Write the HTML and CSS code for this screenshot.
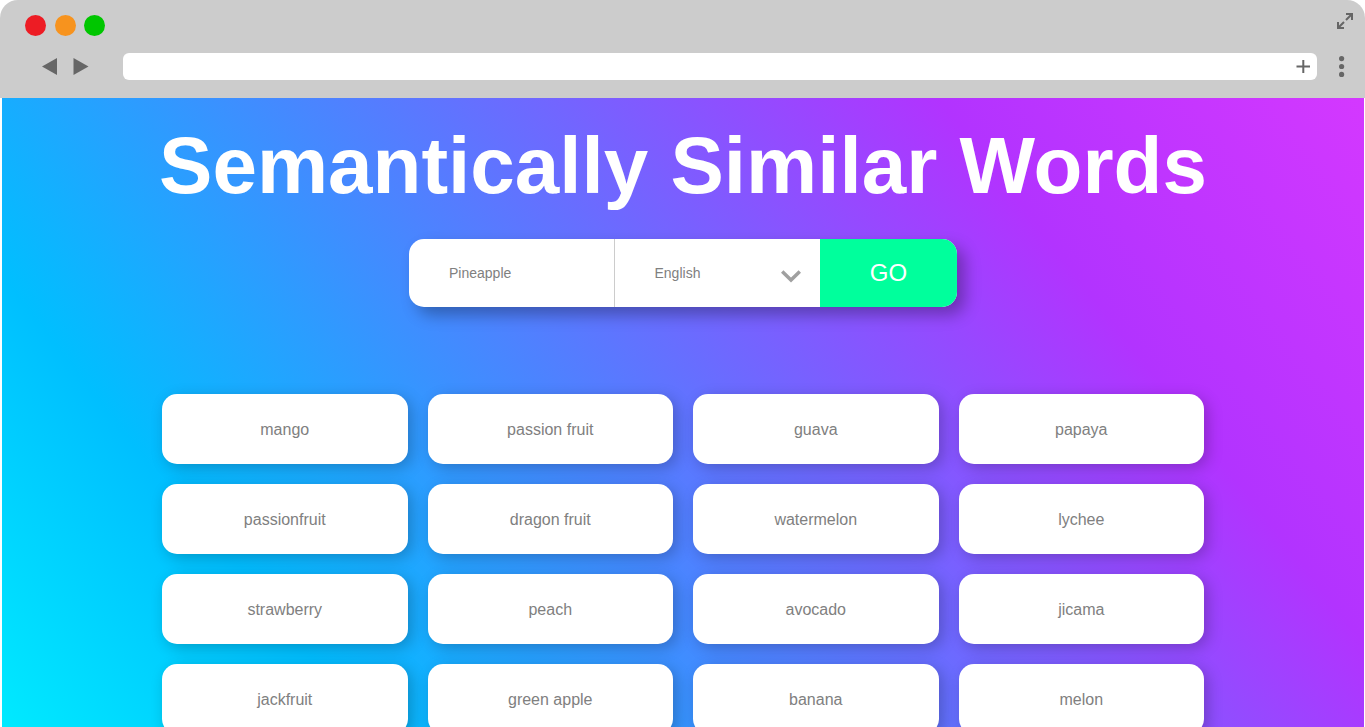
FILE: index.html
```html
<!DOCTYPE html>
<html lang="en">
<head>
<meta charset="utf-8">
<title>Semantically Similar Words</title>
<link rel="stylesheet" href="styles.css">
</head>
<body>
<div class="browser">
  <header class="chrome">
    <div class="chrome-top">
      <div class="lights">
        <span class="light red"></span>
        <span class="light orange"></span>
        <span class="light green"></span>
      </div>
      <button class="icon-button" aria-label="Full screen">
        <svg width="16" height="16" viewBox="0 0 16 16" fill="none" stroke="#666" stroke-width="2"><path d="M9 1h6v6M15 1L9 7M1 9v6h6M1 15l6-6"/></svg>
      </button>
    </div>
    <div class="chrome-bar">
      <nav class="arrows">
        <button class="icon-button" aria-label="Back"><svg width="16" height="18" viewBox="0 0 16 18"><path d="M0 8.500L15 0v17z" fill="#666"/></svg></button>
        <button class="icon-button" aria-label="Forward"><svg width="16" height="18" viewBox="0 0 16 18"><path d="M15.500 8.500L0.500 0v17z" fill="#666"/></svg></button>
      </nav>
      <div class="address">
        <input class="address-input" type="text" aria-label="Address">
        <button class="icon-button" aria-label="New tab"><svg width="14" height="14" viewBox="0 0 14 14" stroke="#666" stroke-width="2"><path d="M7.300 0v13M0.500 6.600h13.500"/></svg></button>
      </div>
      <button class="icon-button" aria-label="Menu"><svg width="6" height="22" viewBox="0 0 6 22" fill="#666"><circle cx="2.600" cy="2.600" r="2.600"/><circle cx="2.600" cy="10.500" r="2.600"/><circle cx="2.600" cy="18.400" r="2.600"/></svg></button>
    </div>
  </header>
  <main class="page">
    <h1 class="title">Semantically Similar Words</h1>
    <form class="search">
      <input class="word" type="text" aria-label="Word" value="Pineapple">
      <div class="language-field">
        <select class="language" aria-label="Language"><option>English</option></select>
        <svg class="chevron" width="20" height="13" viewBox="0 0 20 13" fill="none" stroke="#a0a0a0" stroke-width="3.500"><path d="M1.200 1.500L10 10l8.800-8.500"/></svg>
      </div>
      <button class="go" type="button">GO</button>
    </form>
    <ul class="results">
      <li class="card">mango</li><li class="card">passion fruit</li><li class="card">guava</li><li class="card">papaya</li>
      <li class="card">passionfruit</li><li class="card">dragon fruit</li><li class="card">watermelon</li><li class="card">lychee</li>
      <li class="card">strawberry</li><li class="card">peach</li><li class="card">avocado</li><li class="card">jicama</li>
      <li class="card">jackfruit</li><li class="card">green apple</li><li class="card">banana</li><li class="card">melon</li>
    </ul>
  </main>
</div>
</body>
</html>
```
FILE: styles.css
```css
* { box-sizing: border-box; }
body {
  margin: 0;
  background: #fff;
  font-family: "Liberation Sans", Arial, sans-serif;
}
.browser {
  height: 100vh;
  display: flex;
  flex-direction: column;
  overflow: hidden;
}
.chrome {
  flex: none;
  background: #ccc;
  border-radius: 18px 18px 0 0;
  padding: 13px 12px 18px 25px;
}
.chrome-top, .chrome-bar, .lights, .arrows, .address {
  display: flex;
  align-items: center;
}
.chrome-top { justify-content: space-between; align-items: flex-start; }
.lights { gap: 8px; padding-top: 2px; }
.light { width: 21px; height: 21px; border-radius: 50%; }
.red { background: #ed1c24; }
.orange { background: #f7931e; margin-left: 1px; }
.green { background: #00c600; }
.icon-button {
  display: block;
  flex: none;
  margin: 0;
  padding: 0;
  border: 0;
  background: none;
}
.icon-button svg { display: block; }
.chrome-bar { margin-top: 17px; padding: 0 8px 0 17px; }
.arrows { gap: 15px; margin-right: 34px; }
.address {
  flex: 1;
  height: 27px;
  margin-right: 22px;
  padding-right: 7px;
  background: #fff;
  border-radius: 6px;
}
.address-input {
  flex: 1;
  border: 0;
  outline: 0;
  background: none;
  padding: 0 10px;
}
.page {
  flex: 1;
  min-height: 0;
  margin: 0 1px 0 2px;
  padding: 20px 160px 0;
  overflow: hidden;
  background: linear-gradient(52deg, #00eaff, #00bfff 19%, #b233ff 77%, #d438ff);
}
.title {
  margin: 0 -40px;
  color: #fff;
  font-size: 80px;
  line-height: 96px;
  font-weight: 700;
  text-align: center;
  white-space: nowrap;
}
.search {
  display: grid;
  grid-template-columns: 3fr 3fr 2fr;
  width: 548px;
  height: 68px;
  margin: 25px auto 87px;
  border-radius: 15px;
  background: #fff;
  box-shadow: 8px 8px 16px rgba(0, 0, 0, 0.3);
}
.word, .language {
  width: 100%;
  height: 100%;
  margin: 0;
  padding: 0 40px;
  border: 0;
  outline: 0;
  background: none;
  color: #808080;
  font: 14px "Liberation Sans", Arial, sans-serif;
  appearance: none;
}
.word { min-width: 0; border-right: 1px solid #ccc; }
.language-field { min-width: 0; position: relative; }
.chevron { position: absolute; right: 19px; top: 31px; pointer-events: none; }
.go {
  padding: 0;
  border: 0;
  border-radius: 0 15px 15px 0;
  background: #00ff9c;
  color: #fff;
  font: 24px "Liberation Sans", Arial, sans-serif;
}
.results {
  display: grid;
  grid-template-columns: repeat(4, 1fr);
  gap: 20px;
  margin: 0;
  padding: 0;
  list-style: none;
}
.card {
  height: 70px;
  padding-top: 2px;
  display: flex;
  align-items: center;
  justify-content: center;
  border-radius: 15px;
  background: #fff;
  color: #808080;
  font-size: 16px;
  box-shadow: 4px 4px 15px rgba(0, 0, 0, 0.22);
}
```
